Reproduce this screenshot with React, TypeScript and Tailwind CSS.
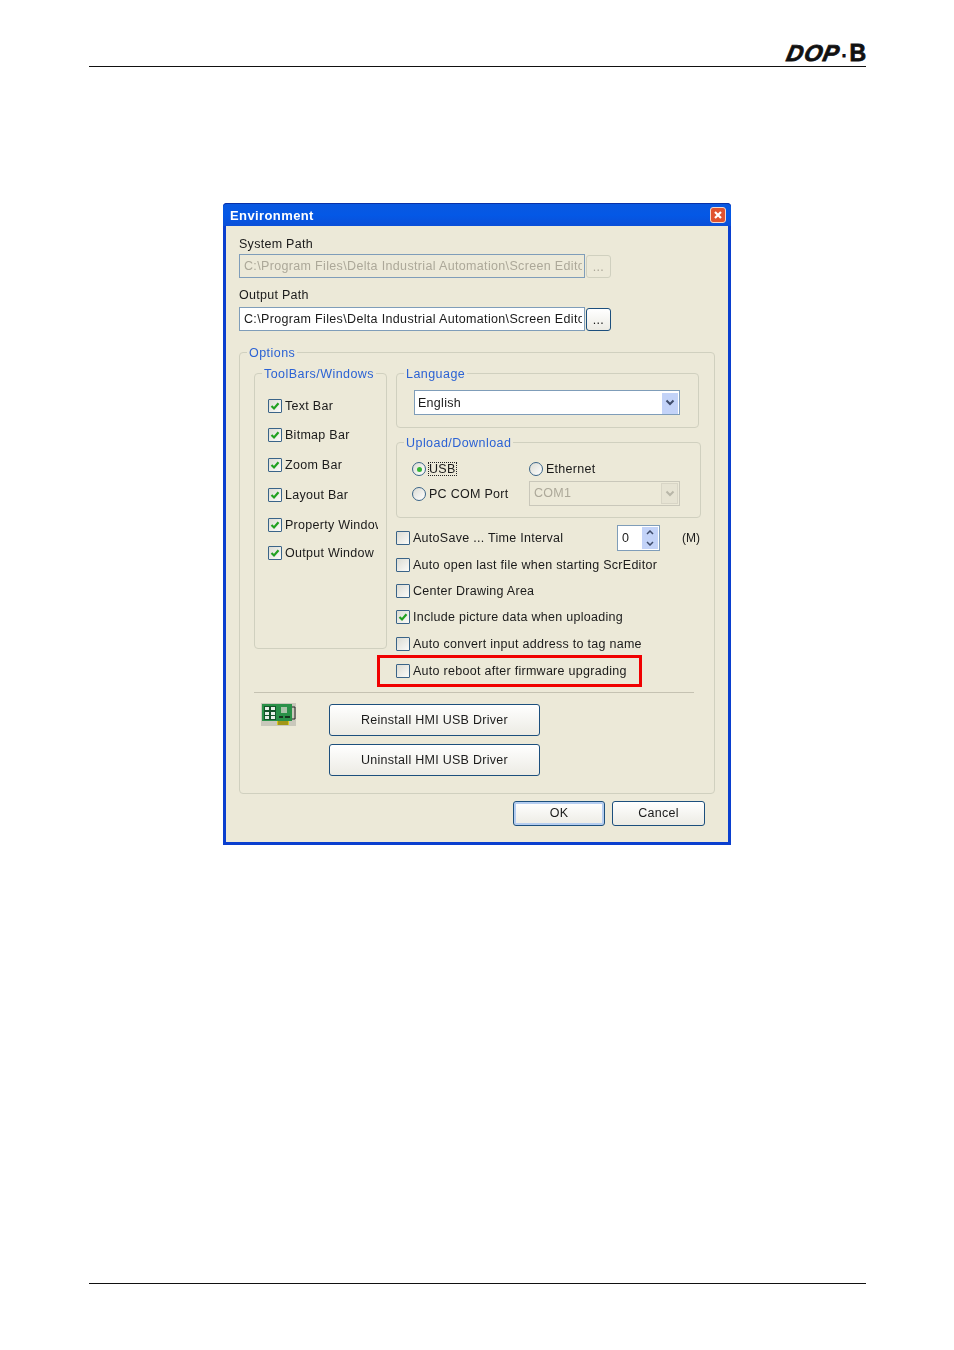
import React from 'react';

const font = 'font-["Liberation_Sans",Arial,sans-serif]';

const CheckBox = ({ checked, label, className = '' }: { checked?: boolean; label: string; className?: string }) => (
  <div className={`flex items-center h-[16px] whitespace-nowrap ${className}`}>
    <div className="w-[14px] h-[14px] shrink-0 border border-[#3a6488] rounded-[1px] bg-gradient-to-br from-[#dcdcd4] to-[#fbfbf9] flex items-center justify-center">
      {checked && (
        <svg width="10" height="10" viewBox="0 0 10 10">
          <path d="M1.5 5 L4 7.5 L8.5 2.2" fill="none" stroke="#21a121" strokeWidth="2.2" />
        </svg>
      )}
    </div>
    <span className="ml-[3px] leading-none">{label}</span>
  </div>
);

const Radio = ({ checked, label, focused }: { checked?: boolean; label: string; focused?: boolean }) => (
  <div className="flex items-center h-[16px] whitespace-nowrap">
    <div className="w-[14px] h-[14px] shrink-0 rounded-full border border-[#3a6488] bg-gradient-to-br from-[#dcdcd4] to-white flex items-center justify-center">
      {checked && <div className="w-[5px] h-[5px] rounded-full bg-[#35b535]" />}
    </div>
    <span className={`ml-[3px] leading-none ${focused ? 'outline-dotted outline-1 outline-[#222]' : ''}`}>{label}</span>
  </div>
);

const Group = ({ title, className = '', children }: { title: string; className?: string; children?: React.ReactNode }) => (
  <div className={`relative border border-[#d0d0bf] rounded-[4px] ${className}`}>
    <span className="absolute -top-[6px] left-[7px] px-[2px] bg-[#ece9d8] text-[#2b62d4] leading-none whitespace-nowrap tracking-[0.45px]">
      {title}
    </span>
    {children}
  </div>
);

const PushButton = ({ label, className = '' }: { label: string; className?: string }) => (
  <div className={`flex items-center justify-center border border-[#1c4f7d] rounded-[3px] bg-gradient-to-b from-white to-[#ecebe4] ${className}`}>
    {label}
  </div>
);

const PathField = ({ disabled }: { disabled?: boolean }) => (
  <div className="flex items-center">
    <div className={`w-[346px] h-[24px] border border-[#7f9db9] pl-[4px] pt-[1px] flex items-center ${disabled ? 'text-[#aca899]' : 'bg-white'}`}>
      <div className="w-[338px] overflow-hidden whitespace-nowrap tracking-[0.34px]">
        {'C:\\Program Files\\Delta Industrial Automation\\Screen Editor'}
      </div>
    </div>
    <div className={`w-[25px] h-[23px] ml-[1px] rounded-[3px] border flex items-end justify-center pb-[3px] leading-none ${disabled ? 'border-[#d0d0bf] text-[#aca899]' : 'border-[#1c4f7d] bg-gradient-to-b from-white to-[#ecebe4]'}`}>
      ...
    </div>
  </div>
);

const BoardIcon = () => (
  <svg width="35" height="24" viewBox="0 0 35 24" className="shrink-0">
    <rect x="0" y="0" width="35" height="23" fill="#c9c8bb" />
    <rect x="1" y="1" width="30" height="17" fill="#2a9148" />
    <path d="M31 4 H34 V16 H31" fill="none" stroke="#222" strokeWidth="1" />
    <rect x="3" y="3" width="12" height="14" fill="#14532a" />
    <rect x="4" y="4" width="4" height="3" fill="#e8efe8" />
    <rect x="10" y="4" width="4" height="3" fill="#e8efe8" />
    <rect x="4" y="9" width="4" height="3" fill="#e8efe8" />
    <rect x="10" y="9" width="4" height="3" fill="#e8efe8" />
    <rect x="4" y="13" width="4" height="3" fill="#e8efe8" />
    <rect x="10" y="13" width="4" height="3" fill="#e8efe8" />
    <rect x="20" y="4" width="6" height="6" fill="#a9c4a9" />
    <rect x="18" y="13" width="4" height="2" fill="#16351e" />
    <rect x="24" y="13" width="5" height="2" fill="#16351e" />
    <rect x="16" y="18" width="12" height="4" fill="#d8c91e" />
    <path d="M18 18v4M20 18v4M22 18v4M24 18v4M26 18v4" stroke="#6d6510" strokeWidth="1" />
  </svg>
);

export default function App() {
  return (
    <div className={`w-[954px] h-[1350px] bg-white text-[#1a1a1a] text-[12.5px] tracking-[0.28px] ${font}`}>
      <div className="ml-[89px] w-[777px] h-[67px] border-b border-[#111] flex items-end justify-end">
        <div className="text-[23px] leading-[20px] font-bold italic text-[#111] flex items-baseline [-webkit-text-stroke:0.8px_#111]">
          <span className="-skew-x-12 tracking-[1px]">DOP</span>
          <span className="mx-[2px] not-italic text-[16px]">·</span>
          <span className="not-italic tracking-normal">B</span>
        </div>
      </div>

      <div className="mt-[136px] ml-[223px] w-[508px] h-[642px] flex flex-col rounded-t-[4px] bg-[#0a3fcf] blur-[0.3px]">
        <div className="h-[23px] shrink-0 rounded-t-[4px] bg-gradient-to-b from-[#0a58e0] via-[#0458e6] to-[#0a4fd8] flex items-center justify-between pl-[7px] pr-[5px] border-t border-[#0831a8]">
          <span className="text-white font-bold text-[13px] leading-none pt-[1px] tracking-[0.4px]">Environment</span>
          <div className="w-[16px] h-[16px] rounded-[3px] bg-[#e0532f] border border-[#f3d9cf] flex items-center justify-center">
            <svg width="10" height="10" viewBox="0 0 10 10">
              <path d="M2 2 L8 8 M8 2 L2 8" stroke="#fff" strokeWidth="2.2" />
            </svg>
          </div>
        </div>

        <div className="mx-[3px] mb-[3px] flex-1 bg-[#ece9d8] px-[13px] flex flex-col">
          <div className="mt-[11px] h-[15px] leading-[15px]">System Path</div>
          <div className="mt-[2px]"><PathField disabled /></div>
          <div className="mt-[10px] h-[15px] leading-[15px]">Output Path</div>
          <div className="mt-[4px]"><PathField /></div>

          <Group title="Options" className="mt-[21px] w-[476px] h-[442px] shrink-0">
            <div className="flex pt-[20px] pl-[14px]">
              <Group title="ToolBars/Windows" className="w-[133px] h-[276px] shrink-0">
                <div className="pl-[13px] pt-[24px] flex flex-col">
                  <CheckBox checked label="Text Bar" />
                  <CheckBox checked label="Bitmap Bar" className="mt-[13px]" />
                  <CheckBox checked label="Zoom Bar" className="mt-[14px]" />
                  <CheckBox checked label="Layout Bar" className="mt-[14px]" />
                  <div className="w-[110px] overflow-hidden mt-[14px]"><CheckBox checked label="Property Window" /></div>
                  <CheckBox checked label="Output Window" className="mt-[12px]" />
                </div>
              </Group>

              <div className="ml-[9px] flex flex-col w-[305px]">
                <Group title="Language" className="w-[303px] h-[55px] shrink-0">
                  <div className="ml-[17px] mt-[16px] w-[266px] h-[25px] border border-[#7f9db9] bg-white flex items-center pl-[3px] pr-[1px] pt-[1px] justify-between">
                    <span>English</span>
                    <div className="w-[16px] h-[21px] bg-[#c3d3f8] flex items-center justify-center">
                      <svg width="10" height="8" viewBox="0 0 10 8"><path d="M1.5 1.5 L5 5 L8.5 1.5" fill="none" stroke="#3f4c6b" strokeWidth="2" /></svg>
                    </div>
                  </div>
                </Group>

                <Group title="Upload/Download" className="mt-[14px] w-[305px] h-[76px] shrink-0">
                  <div className="grid grid-cols-[117px_1fr] pl-[15px] pt-[18px]">
                    <Radio checked focused label="USB" />
                    <Radio label="Ethernet" />
                    <div className="mt-[9px]"><Radio label="PC COM Port" /></div>
                    <div className="mt-[4px] w-[151px] h-[25px] border border-[#c9c7ba] text-[#aca899] flex items-center pl-[4px] pr-[1px] justify-between">
                      <span>COM1</span>
                      <div className="w-[17px] h-[21px] bg-[#e6e3d3] border border-[#d8d5c6] flex items-center justify-center">
                        <svg width="10" height="8" viewBox="0 0 10 8"><path d="M1.5 1.5 L5 5 L8.5 1.5" fill="none" stroke="#b8b6a8" strokeWidth="2" /></svg>
                      </div>
                    </div>
                  </div>
                </Group>

                <div className="flex items-center mt-[6px] h-[28px] whitespace-nowrap">
                  <CheckBox label="AutoSave ... Time Interval" className="w-[221px] shrink-0" />
                  <div className="w-[43px] h-[26px] border border-[#7f9db9] bg-white flex items-center justify-between pl-[4px] pr-[1px]">
                    <span>0</span>
                    <div className="w-[16px] h-[22px] bg-[#c3d3f8] flex flex-col items-center justify-around">
                      <svg width="8" height="5" viewBox="0 0 8 5"><path d="M1 4 L4 1 L7 4" fill="none" stroke="#3f4c6b" strokeWidth="1.5" /></svg>
                      <svg width="8" height="5" viewBox="0 0 8 5"><path d="M1 1 L4 4 L7 1" fill="none" stroke="#3f4c6b" strokeWidth="1.5" /></svg>
                    </div>
                  </div>
                  <span className="ml-[22px] tracking-normal text-[12px]">(M)</span>
                </div>
                <CheckBox label="Auto open last file when starting ScrEditor" className="mt-[5px]" />
                <CheckBox label="Center Drawing Area" className="mt-[10px]" />
                <CheckBox checked label="Include picture data when uploading" className="mt-[10px]" />
                <CheckBox label="Auto convert input address to tag name" className="mt-[11px]" />
                <div className="relative mt-[11px]">
                  <CheckBox label="Auto reboot after firmware upgrading" />
                  <div className="absolute -left-[19px] -top-[8px] w-[265px] h-[32px] border-[3px] border-[#f00000]" />
                </div>
              </div>
            </div>

            <div className="ml-[14px] mt-[13px] w-[440px] h-[1px] bg-[#c5c2b2]" />

            <div className="flex pl-[21px] pt-[10px]">
              <BoardIcon />
              <div className="ml-[33px] flex flex-col gap-[8px] pt-[1px]">
                <PushButton label="Reinstall HMI USB Driver" className="w-[211px] h-[32px]" />
                <PushButton label="Uninstall HMI USB Driver" className="w-[211px] h-[32px]" />
              </div>
            </div>
          </Group>

          <div className="mt-[7px] flex justify-end gap-[7px] pr-[10px]">
            <PushButton label="OK" className="w-[92px] h-[25px] shadow-[inset_0_0_0_2px_#b5cdf0]" />
            <PushButton label="Cancel" className="w-[93px] h-[25px]" />
          </div>
        </div>
      </div>

      <div className="ml-[89px] mt-[438px] w-[777px] h-[1px] bg-[#111]" />
    </div>
  );
}
